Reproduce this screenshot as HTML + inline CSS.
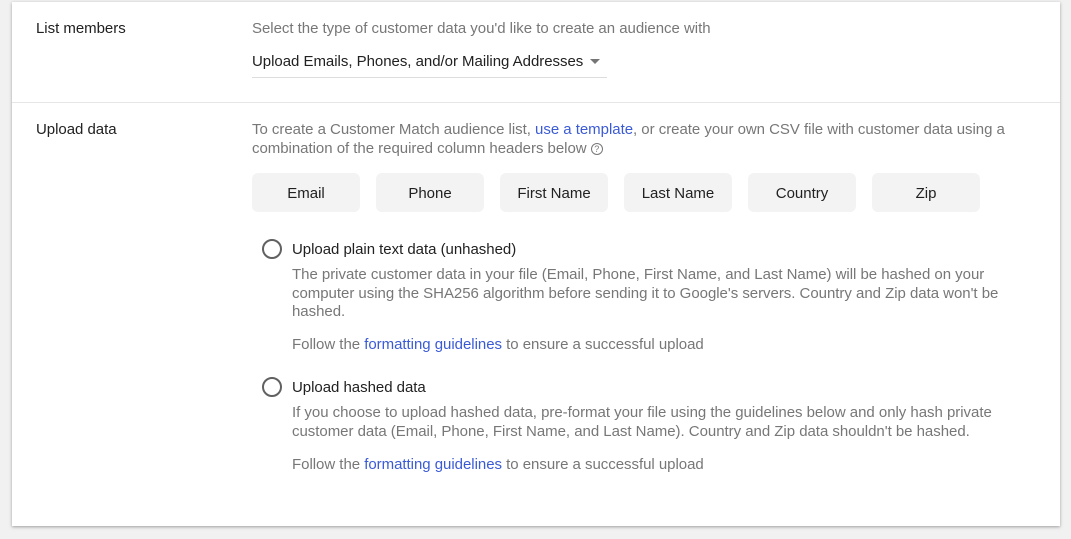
<!DOCTYPE html>
<html><head><style>
body{margin:0;width:1071px;height:539px;background:#f1f1f1;font-family:"Liberation Sans",sans-serif;position:relative;overflow:hidden}
.card{position:absolute;left:12px;top:2px;width:1048px;height:524px;background:#fff;box-shadow:0 1px 3px rgba(0,0,0,.35)}
.a{position:absolute;white-space:nowrap;font-size:15px;letter-spacing:-0.03px}
.g{color:#777}.k{color:#212121}.b{color:#3b5bd6}
.chip{position:absolute;top:173px;width:108px;height:39px;background:#f3f3f3;border-radius:6px;font-size:15px;color:#212121;text-align:center;line-height:41px}
.r{position:absolute;width:16px;height:16px;border:2px solid #616161;border-radius:50%}
</style></head><body>
<div class="card"></div>
<div class="a k" style="left:36px;top:20px">List members</div>
<div class="a g" style="left:252px;top:20px">Select the type of customer data you'd like to create an audience with</div>
<div class="a k" style="left:252px;top:53px">Upload Emails, Phones, and/or Mailing Addresses</div>
<div style="position:absolute;left:590px;top:59px;width:0;height:0;border-left:5px solid transparent;border-right:5px solid transparent;border-top:5px solid #757575"></div>
<div style="position:absolute;left:252px;top:77px;width:355px;height:1px;background:#ddd"></div>
<div style="position:absolute;left:12px;top:102px;width:1048px;height:1px;background:#e6e6e6"></div>
<div class="a k" style="left:36px;top:121px">Upload data</div>
<div class="a g" style="left:252px;top:121px">To create a Customer Match audience list, <span class="b">use a template</span>, or create your own CSV file with customer data using a</div>
<div class="a g" style="left:252px;top:140px">combination of the required column headers below <span style="display:inline-block;width:10px;height:10px;border:1px solid #777;border-radius:50%;font-size:9px;line-height:10px;text-align:center;vertical-align:middle">?</span></div>
<div class="chip" style="left:252px">Email</div>
<div class="chip" style="left:376px">Phone</div>
<div class="chip" style="left:500px">First Name</div>
<div class="chip" style="left:624px">Last Name</div>
<div class="chip" style="left:748px">Country</div>
<div class="chip" style="left:872px">Zip</div>
<div class="r" style="left:262px;top:239px"></div>
<div class="a k" style="left:292px;top:241px">Upload plain text data (unhashed)</div>
<div class="a g" style="left:292px;top:266px;line-height:18.5px">The private customer data in your file (Email, Phone, First Name, and Last Name) will be hashed on your<br>computer using the SHA256 algorithm before sending it to Google's servers. Country and Zip data won't be<br>hashed.</div>
<div class="a g" style="left:292px;top:336px">Follow the <span class="b">formatting guidelines</span> to ensure a successful upload</div>
<div class="r" style="left:262px;top:377px"></div>
<div class="a k" style="left:292px;top:379px">Upload hashed data</div>
<div class="a g" style="left:292px;top:404px;line-height:18.5px">If you choose to upload hashed data, pre-format your file using the guidelines below and only hash private<br>customer data (Email, Phone, First Name, and Last Name). Country and Zip data shouldn't be hashed.</div>
<div class="a g" style="left:292px;top:456px">Follow the <span class="b">formatting guidelines</span> to ensure a successful upload</div>
</body></html>
